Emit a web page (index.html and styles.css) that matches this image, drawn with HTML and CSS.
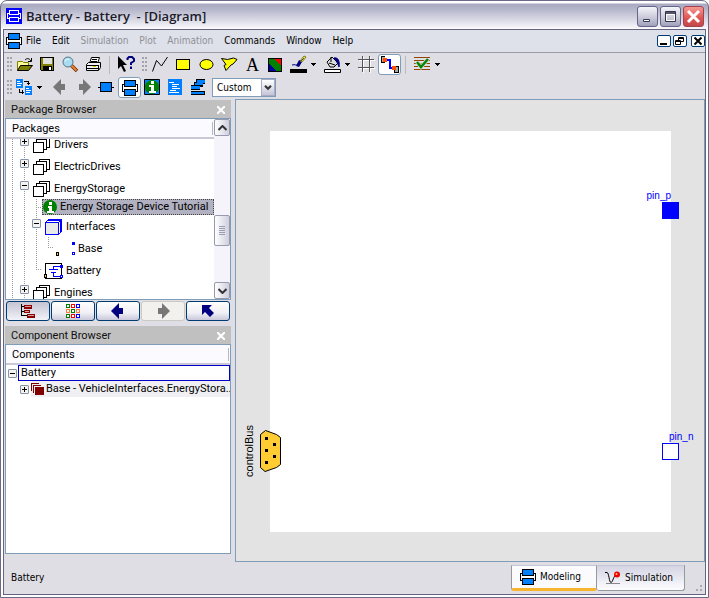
FILE: index.html
```html
<!DOCTYPE html>
<html lang="en">
<head>
<meta charset="utf-8">
<title>Battery - Battery - [Diagram]</title>
<link rel="stylesheet" href="styles.css">
</head>
<body>
<svg class="defs" aria-hidden="true">
  <symbol id="diagram" viewBox="0 0 16 16">
    <path d="M0 4h16v8H0z"/>
    <path d="M1 5h14v6H1z" fill="#fff"/>
    <path d="M2 0h12v7H2zM2 9h12v7H2z"/>
    <path d="M3 1h10v5H3zM3 10h10v5H3z" fill="#0080ff"/>
  </symbol>
  <symbol id="stack" viewBox="0 0 17 16">
    <path d="M6.500.500h10v10h-10z" fill="#fff" stroke="#000"/>
    <path d="M3.500 2.500h10v10h-10z" fill="#fff" stroke="#000"/>
    <path d="M.500 5.500h10v10h-10z" fill="#fff" stroke="#000"/>
  </symbol>
  <symbol id="caret" viewBox="0 0 5 3"><path d="M0 0h5v1H0zM1 1h3v1H1zM2 2h1v1H2z"/></symbol>
  <symbol id="arrow" viewBox="0 0 14 16"><path d="M0 8L8 0v5h4v6H8v5z" fill="currentColor"/></symbol>
  <symbol id="close" viewBox="0 0 8 8"><path d="M0 0l8 8M8 0L0 8" stroke="currentColor" stroke-width="2" fill="none"/></symbol>
</svg>
<div class="window">
  <header class="titlebar">
    <svg class="app-icon crisp" viewBox="0 0 16 16"><path d="M0 0h16v16H0z" fill="#00f"/><path d="M3.500 2.500h9v4h-9zM3.500 9.500h9v4h-9zM3 5.500H1.500v5H3M13 5.500h1.500v5H13" fill="none" stroke="#fff"/></svg>
    <h1>Battery - Battery&nbsp; - [Diagram]</h1>
    <button class="frame-btn" aria-label="Minimize"><svg width="15" height="15"><path d="M3.500 10.500h6v2h-6z" fill="#fff" stroke="#333b5c"/></svg></button>
    <button class="frame-btn" aria-label="Maximize"><svg width="15" height="15"><path d="M2.500 2.500h10v10h-10z" fill="none" stroke="#333348"/><path d="M3 3h9v2H3z" fill="#55556d"/><path d="M3.500 5.500h8v6h-8z" fill="none" stroke="#fff"/></svg></button>
    <button class="frame-btn frame-close" aria-label="Close"><svg width="15" height="15"><path d="M2 2l11 11M13 2L2 13" stroke="#fff" stroke-width="3"/></svg></button>
  </header>
  <div class="client">
    <nav class="menubar">
      <svg class="icon-16 crisp"><use href="#diagram"/></svg>
      <button>File</button><button>Edit</button><button disabled>Simulation</button><button disabled>Plot</button><button disabled>Animation</button><button>Commands</button><button>Window</button><button>Help</button>
      <span class="mdi">
        <button aria-label="Minimize diagram"><svg width="12" height="10"><path d="M2 7h7v2H2z"/></svg></button>
        <button aria-label="Restore diagram"><svg width="12" height="10"><path d="M4.500 1.500h5v4h-5zM4 2.500h6M1.500 4.500h5v4h-5zM1 5.500h6" fill="none" stroke="#000"/><path d="M2 6h4v2H2z" fill="#fff"/></svg></button>
        <button aria-label="Close diagram"><svg width="12" height="10"><path d="M2.500 1.500l7 7M9.500 1.500l-7 7" stroke="#000" stroke-width="2"/></svg></button>
      </span>
    </nav>
    <div class="toolbars">
      <div class="toolbar">
        <span class="grip"></span>
        <button aria-label="Open"><svg><path d="M1.500 14.500v-9h5l1 1h5v3" fill="#ff9" stroke="#808000"/><path d="M1.500 14.500l3-5h12l-4 5z" fill="#808000" stroke="#000"/><path d="M9 4c2-2 4-2 6 1M15.500 2v3.500H12" fill="none" stroke="#000"/></svg></button>
        <button aria-label="Save"><svg class="crisp" viewBox="-1 0 17 17"><path d="M.500 1.500h13v13h-12l-1-1z" fill="#808000" stroke="#000"/><path d="M3 2h9v6H3z" fill="#e0e0e0"/><path d="M3 10h9v5H3z" fill="#000"/><path d="M9 11h2v3H9z" fill="#fff"/></svg></button>
        <button aria-label="Find"><svg><path d="M9 9l6 6" stroke="#713000" stroke-width="3.500"/><path d="M9 9l5.500 5.500" stroke="#ed8230" stroke-width="2"/><circle cx="6" cy="6" r="5" fill="#a9dcf0" stroke="#53758b"/><path d="M3 5.500c1-2 2-3 4-2" stroke="#fff" fill="none"/></svg></button>
        <button aria-label="Print"><svg><path d="M4.500 7.500l2-6h8l-2 6z" fill="#fff" stroke="#000"/><path d="M7 3.500h5M6 5.500h6" stroke="#000"/><path d="M1.500 8.500l2-2h12v5l-2 3h-12z" fill="#eee" stroke="#000"/><path d="M1 9.500h12M1 12.500h12M13.500 9v5" stroke="#000" fill="none"/><path d="M8 10.500h3" stroke="#d8cc00"/></svg></button>
        <span class="sep"></span>
        <button aria-label="What's this"><svg><path d="M0 0v13l3-3 3 6 2-1-3-6h4z" fill="#000"/><path d="M9.500 4V2.500l1.500-1.500h3l2 2v2l-3 2v2M13 10.500v2.500" fill="none" stroke="#00007f" stroke-width="2"/></svg></button>
        <span class="grip inner"></span>
        <button aria-label="Line"><svg><path d="M.500 15.500l4-11 5 5.500 6-9" fill="none" stroke="#000"/></svg></button>
        <button aria-label="Rectangle"><svg class="crisp" viewBox="-1 -3 17 17"><path d="M.500.500h13v10H.500z" fill="#ff0" stroke="#000"/></svg></button>
        <button aria-label="Ellipse"><svg viewBox="-1 -3 17 17"><ellipse cx="7.500" cy="5.500" rx="6.500" ry="5" fill="#ff0" stroke="#000"/></svg></button>
        <button aria-label="Polygon"><svg><path d="M.500 2.500l6 1 6-1.500 3.500 1.500-4 4.500-2 1-5 5.500-2-5 2-1z" fill="#ff0" stroke="#000"/></svg></button>
        <button class="letter" aria-label="Text">A</button>
        <button aria-label="Bitmap"><svg class="crisp" viewBox="-1 -2 17 17"><path d="M0 0h14v14H0z" fill="#008000"/><path d="M5 0h9v8z" fill="red"/><path d="M0 5l9 9H0z" fill="#0000a0"/><path d="M.500.500h13v13H.500z" fill="none" stroke="#000"/></svg></button>
        <button class="drop" aria-label="Line color"><svg><path d="M2 9c3-1 4 1 6-1" stroke="#00007f" fill="none"/><path d="M6 10l3-6 3 2-3 5z" fill="#00007f"/><path d="M10 5l4-5 2 1-4 5z" fill="#ff0" stroke="#000" stroke-width=".5"/><path d="M10 6l4-4" stroke="#555"/><path d="M0 13h17v4H0z"/></svg><svg class="caret"><use href="#caret"/></svg></button>
        <button class="drop" aria-label="Fill color"><svg><path d="M3 6l5-5 6 6-4 4H6z" fill="#ddd" stroke="#000"/><path d="M5 7l6 2M7 1v5" stroke="#000"/><path d="M10 2c4-1 6 3 5 9-1-3-2-5-5-9" fill="#00007f" stroke="#00007f"/><path d="M.500 13.500h16v3H.500z" fill="#fff" stroke="#000"/></svg><svg class="caret"><use href="#caret"/></svg></button>
        <button aria-label="Grid"><svg class="crisp"><path d="M4.500 0v16M11.500 0v16M0 3.500h16M0 11.500h16" stroke="#fff" transform="translate(1 1)"/><path d="M4.500 0v16M11.500 0v16M0 3.500h16M0 11.500h16" stroke="#555"/></svg></button>
        <button class="checked" aria-label="Connect"><svg class="crisp"><path d="M0 0h4v7H0zM13 10h5v7h-5z" fill="#000"/><path d="M1 1h3v5H1zM14 11h3v5h-3z" fill="#aaa"/><path d="M5 4h4v8h4" stroke="#00f" stroke-width="2" fill="none"/><path d="M2 2h4v4H2zM11 10h4v4h-4z" fill="#ff5000"/></svg></button>
        <span class="sep"></span>
        <button class="drop" aria-label="Check"><svg><path d="M0 1.500h16M0 4.500h16M0 7.500h16M0 10.500h16M0 13.500h16" stroke="#904600"/><path d="M3 6l4 5 7-8" fill="none" stroke="#dfdfe5" stroke-width="4"/><path d="M3 6l4 5 7-8" fill="none" stroke="#080" stroke-width="2.500"/></svg><svg class="caret"><use href="#caret"/></svg></button>
      </div>
      <div class="toolbar">
        <span class="grip"></span>
        <button class="drop wide" aria-label="Switch view"><svg class="crisp"><path d="M0 0h7v9H0zM9 7h7v9H9z" fill="#0080ff"/><path d="M1 2.500h3M1 4.500h5M1 6.500h4M10 9.500h3M10 11.500h5M10 13.500h4" stroke="#fff"/><path d="M8 2.500h4.500V6M11 4.500h3M3.500 10v3H8M6.500 11v4" fill="none" stroke="#000"/></svg><svg class="caret"><use href="#caret"/></svg></button>
        <button class="grey" aria-label="Back"><svg><use href="#arrow" x="1" width="14" height="16"/></svg></button>
        <button class="grey" aria-label="Forward"><svg class="flip"><use href="#arrow" x="1" width="14" height="16"/></svg></button>
        <button aria-label="Icon view"><svg class="crisp" viewBox="0 -3 17 17"><path d="M0 5.500h16" stroke="#000"/><path d="M2.500.500h11v9h-11z" fill="#0080ff" stroke="#000"/></svg></button>
        <button class="checked" aria-label="Diagram view"><svg class="crisp"><use href="#diagram" x="1" y="1" width="16" height="16"/></svg></button>
        <button aria-label="Documentation"><svg><path d="M.500.500h15v15H.500z" fill="#0080ff" stroke="#000"/><circle cx="8" cy="8" r="7" fill="#008000"/><path d="M7 2h3v3H7zM5 6h5v6h2v2H5v-2h2V8H5z" fill="#fff"/></svg></button>
        <button aria-label="Text view"><svg class="crisp" viewBox="-1 0 17 17"><path d="M0 0h14v16H0z" fill="#0080ff"/><path d="M1 3.500h5M4 5.500h7M4 7.500h5M4 9.500h8M2 11.500h6M1 13.500h10" stroke="#fff"/></svg></button>
        <button aria-label="Used classes"><svg class="crisp"><path d="M6 0h9v5H6zM4 3h9v5H4zM1 6h9v5H1zM1 12h14v4H1z"/><path d="M7 1h8v3H7zM5 4h8v2H5zM1 7h9v3H1zM1 13h13v2H1z" fill="#0080ff"/></svg></button>
        <span class="combo"><select aria-label="Zoom"><option>Custom</option></select><svg width="14" height="17" viewBox="0 0 14 17"><path d="M3.500 6.500l3.500 3.500 3.500-3.500" stroke="#333" stroke-width="2.500" fill="none"/></svg></span>
      </div>
    </div>
    <div class="workspace">
      <aside class="sidebar">
        <section class="panel packages">
          <h2>Package Browser<button aria-label="Close Package Browser"><svg width="8" height="8"><use href="#close"/></svg></button></h2>
          <div class="box">
            <div class="pane">
              <h3>Packages</h3>
              <ul class="tree">
                <li><i class="g"></i><i class="g"><button class="tog plus" aria-label="Expand Drivers"></button></i><svg class="stack crisp"><use href="#stack"/></svg>Drivers</li>
                <li><i class="g"></i><i class="g"><button class="tog plus" aria-label="Expand ElectricDrives"></button></i><svg class="stack crisp"><use href="#stack"/></svg>ElectricDrives</li>
                <li><i class="g"></i><i class="g"><button class="tog" aria-label="Collapse EnergyStorage"></button></i><svg class="stack crisp"><use href="#stack"/></svg>EnergyStorage</li>
                <li class="short"><i class="g"></i><i class="g"></i><i class="g tee"></i><span class="selected"><svg width="14" height="14"><circle cx="7" cy="7" r="7" fill="#008000"/><path d="M6 2h3v3H6zM5 6h4v5h2v2H4v-2h2V8H5z" fill="#fff"/></svg>Energy Storage Device Tutorial</span></li>
                <li><i class="g"></i><i class="g"></i><i class="g"><button class="tog" aria-label="Collapse Interfaces"></button></i><svg class="stack crisp" viewBox="0 0 17 16"><path d="M.500 3.500h13v12H.500z" fill="#e8e8e8" stroke="#00f"/><path d="M.500 3.500l3-3h13v12l-3 3M13.500 3.500l3-3M15.500 2v12M2 1.500h13" fill="none" stroke="#00f"/></svg>Interfaces</li>
                <li><i class="g"></i><i class="g"></i><i class="g"></i><i class="g end"></i><svg class="stack crisp" viewBox="0 0 17 16"><path d="M15 1h3v3h-3z" fill="#00f"/><path d="M15.500 11.500h2v2h-2z" fill="#fff" stroke="#00f"/><path d="M-.500 11.500h2v3h-2z" fill="#ffc829" stroke="#000"/></svg>Base</li>
                <li><i class="g"></i><i class="g"></i><i class="g end"></i><svg class="stack crisp" viewBox="0 0 17 16"><path d="M.500.500h16v15H.500z" fill="#fff" stroke="#000"/><path d="M16 3.500H8.500V6M4 6.500h9M6 9.500h5M8.500 10v3.500H16" fill="none" stroke="#00f"/><path d="M15 2h3v3h-3z" fill="#00f"/><path d="M15.500 12.500h2v2h-2z" fill="#fff" stroke="#00f"/><path d="M-1 11h3v4h-3z"/><path d="M0 12h1v2H0z" fill="#fc3"/></svg>Battery</li>
                <li><i class="g"></i><i class="g"><button class="tog plus" aria-label="Expand Engines"></button></i><svg class="stack crisp"><use href="#stack"/></svg>Engines</li>
              </ul>
            </div>
            <div class="scroll">
              <button aria-label="Scroll up"><svg width="9" height="6"><path d="M.500 5l4-4 4 4" fill="none" stroke="#333" stroke-width="2"/></svg></button>
              <span class="space-top"></span><span class="thumb"></span><span class="space-bottom"></span>
              <button aria-label="Scroll down"><svg width="9" height="6"><path d="M.500 1l4 4 4-4" fill="none" stroke="#333" stroke-width="2"/></svg></button>
            </div>
          </div>
          <div class="tree-tools">
            <button class="pressed" aria-label="Tree view"><svg class="crisp" width="16" height="14"><path d="M1.500 0v11.500H7M1 2.500h4M5 7.500H1" fill="none" stroke="#000"/><path d="M4 1h8v4H4zM4 6h6v3H4zM7 10h8v4H7z" fill="#8b0000"/><path d="M5 2h6v1H5zM5 7h4v1H5zM8 11h6v1H8z" fill="#d9a0a0"/></svg></button>
            <button aria-label="Icon grid"><svg class="crisp" width="14" height="14" fill="#fff"><path d="M.500.500h3v3h-3zM5.500 5.500h3v3h-3z" stroke="green"/><path d="M5.500.500h3v3h-3z" stroke="red"/><path d="M10.500.500h3v3h-3z" stroke="#00f"/><path d="M.500 5.500h3v3h-3zM10.500 5.500h3v3h-3z" stroke="#ff7c40"/><path d="M.500 10.500h3v3h-3z" stroke="green"/><path d="M5.500 10.500h3v3h-3z" stroke="red"/><path d="M10.500 10.500h3v3h-3z" stroke="#00f"/></svg></button>
            <button aria-label="Previous"><svg width="14" height="16"><use href="#arrow"/></svg></button>
            <button class="off" disabled aria-label="Next"><svg class="flip" width="14" height="16"><use href="#arrow"/></svg></button>
            <button aria-label="Up"><svg width="12" height="12"><path d="M0 0h10L7 3l5 5-4 4-5-5-3 3z" fill="currentColor"/></svg></button>
          </div>
        </section>
        <section class="panel components">
          <h2>Component Browser<button aria-label="Close Component Browser"><svg width="8" height="8"><use href="#close"/></svg></button></h2>
          <div class="box">
            <div class="pane">
              <h3>Components</h3>
              <ul class="parts">
                <li><button class="tog" aria-label="Collapse Battery"></button><span class="focus">Battery</span></li>
                <li class="child"><button class="tog plus" aria-label="Expand Base"></button><span class="base"><svg class="crisp" width="13" height="12"><path d="M0 0h8v8H0zM2 2h8v8H2z" fill="#800000"/><path d="M1.500 8V1.500H8M3.500 10V3.500H10" fill="none" stroke="#eee"/><path d="M2 2h6v1H3v5H2z" fill="#800000"/><path d="M4 4h9v8H4z" fill="#800000"/></svg>Base - VehicleInterfaces.EnergyStora..</span></li>
              </ul>
            </div>
          </div>
        </section>
      </aside>
      <main class="canvas">
        <div class="sheet">
          <div class="bus"><span>controlBus</span><svg width="22" height="42"><path d="M5.500.500L16.500 4.500l4 3v27l-4 3L5 41.500l-4.500-4V4.500z" fill="#fc3" stroke="#000"/><path d="M5 7h3v3H5zM5 19h3v3H5zM5 31h3v3H5zM13 13h3v3h-3zM13 25h3v3h-3z"/></svg></div>
          <div class="pin pin-p"><span>pin_p</span><i></i></div>
          <div class="pin pin-n"><span>pin_n</span><i></i></div>
        </div>
      </main>
    </div>
    <footer class="status">
      <span class="message">Battery</span>
      <button class="tab active"><svg class="icon-16 crisp"><use href="#diagram"/></svg>Modeling</button>
      <button class="tab"><svg width="16" height="14"><path d="M0 1.500h2c2 0 2 10 4 10s2-7 6-8" fill="none" stroke="#000"/><path d="M1 12.500h14" stroke="#888"/><circle cx="12" cy="3.500" r="3" fill="#e00"/><circle cx="11.500" cy="3" r="1" fill="#fc6"/></svg>Simulation</button>
      <span class="size-grip"></span>
    </footer>
  </div>
</div>
</body>
</html>
```
FILE: styles.css
```css
* { box-sizing: border-box; }
html { background: #fff; }
body { margin: 0; font: 11px/14px "Noto Sans", sans-serif; color: #000; }
button { margin: 0; padding: 0; border: 0; background: none; font: inherit; color: inherit; }
h1, h2, h3, ul { margin: 0; padding: 0; font-weight: normal; font-size: inherit; list-style: none; }
svg { flex: none; display: block; }
.defs { position: absolute; width: 0; height: 0; }
.crisp { shape-rendering: crispEdges; }
.icon-16 { width: 16px; height: 16px; }
.flip { transform: scaleX(-1); }

.window {
  display: flex; flex-direction: column; height: 100vh;
  border: 1px solid #6b6985; border-radius: 7px 7px 0 0;
  background: linear-gradient(#fff 0, #fff 2px, #a9a9c2 3px, #b4b4ca 8px, #f6f6fa 27px, #fff 28px);
  padding: 0 2px 2px;
}
.titlebar { display: flex; align-items: center; gap: 2px; height: 28px; padding: 3px 2px 0 3px; }
.titlebar h1 { flex: 1; margin-left: 2px; font: 600 13px/21px "Open Sans", sans-serif; color: #1c1c2b; white-space: nowrap; }
.app-icon { width: 16px; height: 16px; margin-bottom: 1px; }
.frame-btn {
  width: 21px; height: 21px; display: flex; align-items: center; justify-content: center;
  border: 1px solid #65658a; border-radius: 3px;
  background: linear-gradient(#f4f4fa, #c6c6d6 60%, #a0a0bb);
}
.frame-close { border-color: #a5404f; background: linear-gradient(#f49994, #dd5552 60%, #c2484b); }

.client {
  flex: 1; min-height: 0; display: flex; flex-direction: column;
  border: 1px solid #65637f; background: #dfdee4;
}
.menubar {
  display: flex; align-items: center; gap: 11px; height: 23px; padding: 0 0 0 2px;
  background: #dee1ea; border-bottom: 1px solid #9c9ba6;
  font: 10px/14px "DejaVu Sans Condensed", sans-serif;
}
.menubar > svg { margin-right: -7px; }
.menubar button:disabled { color: #8f8f96; }
.mdi { display: flex; gap: 2px; margin-left: auto; }
.mdi button { display: flex; width: 14px; height: 12px; border: 1px solid #003c74; border-radius: 2px; background: #fff; }
.mdi button:last-child { margin-left: 2px; }

.toolbars { padding: 0 3px; }
.toolbar { display: flex; align-items: center; height: 23px; }
.toolbar button { width: 23px; height: 21px; display: flex; align-items: center; justify-content: center; }
.toolbar button svg { width: 17px; height: 17px; overflow: visible; }
.toolbar .drop { width: 34px; gap: 4px; padding-left: 3px; justify-content: flex-start; }
.toolbar .wide { width: 36px; }
.toolbar button .caret { width: 5px; height: 3px; }
.toolbar .checked { border: 1px solid #7f9db9; border-radius: 3px; background: #fff; }
.toolbar .letter { font: 18px/20px "Liberation Serif", serif; }
.grey { color: #777; }
.grip { width: 5px; height: 15px; margin: 0 1px 0 0; background: radial-gradient(circle at 1px 1px, #a4a3ac 1px, transparent 1px) 0 0 / 3px 4px; }
.grip.inner { margin: 0 2px 0 4px; }
.sep { width: 1px; height: 18px; margin: 0 5px 0 4px; background: #bbb; }
.combo { display: flex; position: relative; width: 64px; height: 19px; margin-left: 2px; border: 1px solid #7f9db9; background: #fff; }
.combo select { flex: 1; width: 100%; appearance: none; border: 0; padding: 0 0 0 4px; background: none; color: #000; font: 10px/14px "DejaVu Sans Condensed", sans-serif; }
.combo svg { position: absolute; right: 0; top: 0; pointer-events: none; border: 1px solid #aaabc4; background: linear-gradient(#fff, #c5c5d8); }

.workspace { flex: 1; min-height: 0; display: grid; grid-template-columns: 226px minmax(0, 1fr); gap: 4px; padding-left: 1px; }
.sidebar { display: flex; flex-direction: column; gap: 5px; padding: 1px 0 8px; font: 11px/14px Roboto, sans-serif; min-height: 0; }
.panel { display: flex; flex-direction: column; }
.components { flex: 1; }
.panel h2 { display: flex; justify-content: space-between; align-items: center; height: 18px; padding: 1px 6px 0; background: #c0c0c0; color: #111; }
.panel h2 button { color: #fff; }
.box { display: flex; border: 1px solid #7f9db9; background: #fff; }
.components .box { flex: 1; }
.pane { flex: 1; min-width: 0; }
.pane h3 { height: 20px; padding: 0 6px; line-height: 20px; background: linear-gradient(90deg, transparent calc(100% - 2px), #b8b8c4 0 calc(100% - 1px), transparent 0) 0 3px / 100% 13px no-repeat, #fafaff; border-bottom: 2px solid #c9c9d6; }
.packages .box { height: 182px; }
.tree { height: 160px; overflow: hidden; }
.tree li { display: flex; align-items: center; height: 22px; padding-top: 2px; white-space: nowrap; }
.tree li:first-child { margin-top: -6px; }
.tree .short { height: 16px; padding-top: 0; }
.stack { width: 17px; height: 16px; margin: 0 4px 0 3px; overflow: visible; }
.g { width: 12px; align-self: stretch; margin-top: -2px; display: flex; justify-content: center; padding-top: 4px; background: repeating-linear-gradient(#999 0 1px, #fff 1px 2px) 6px 0 / 1px 100% no-repeat; }
.short .g { margin-top: 0; }
.g.end { background: repeating-linear-gradient(#999 0 1px, #fff 1px 2px) 6px 0 / 1px 10px no-repeat, repeating-linear-gradient(90deg, #999 0 1px, #fff 1px 2px) 6px 10px / 5px 1px no-repeat; }
.g.tee { background: repeating-linear-gradient(#999 0 1px, #fff 1px 2px) 6px 0 / 1px 100% no-repeat, repeating-linear-gradient(90deg, #999 0 1px, #fff 1px 2px) 6px 8px / 6px 1px no-repeat; }
.tog {
  flex: none; width: 9px; height: 9px; border: 1px solid #8593a8; border-radius: 1px;
  background: linear-gradient(#000, #000) center / 5px 1px no-repeat, #f4f3f0;
}
.g .tog { margin-left: 1px; }
.tog.plus { background: linear-gradient(#000, #000) center / 5px 1px no-repeat, linear-gradient(#000, #000) center / 1px 5px no-repeat, #f4f3f0; }
.selected { flex: 1; display: flex; align-items: center; gap: 3px; height: 16px; line-height: 16px; background: #b1b1c1; border: 1px dotted #444; }
.scroll { display: flex; flex-direction: column; width: 16px; background: #f5f4fa; }
.scroll button, .thumb { display: flex; align-items: center; justify-content: center; height: 17px; border: 1px solid #9899ae; border-radius: 2px; background: linear-gradient(90deg, #fff, #cfcfde); }
.space-top { flex: 79; }
.space-bottom { flex: 36; }
.scroll .thumb { height: 31px; background: repeating-linear-gradient(#9c9cb2 0 1px, transparent 1px 2px) center / 6px 9px no-repeat, linear-gradient(90deg, #fff, #cfcfde); }
.tree-tools { display: flex; gap: 1px; padding: 1px 1px 0; color: #000080; }
.tree-tools button { flex: 1; height: 20px; display: flex; align-items: center; justify-content: center; border: 1px solid #003c74; border-radius: 3px; background: linear-gradient(#fff, #f0f0f6 60%, #c8c8da); }
.tree-tools .pressed { background: linear-gradient(#c4c4d4, #f2f2f8); }
.tree-tools .off { border-color: #cac9c5; background: #f2f1ed; color: #777; }
.parts li { display: flex; align-items: center; height: 16px; gap: 1px; padding-left: 2px; }
.parts .child { padding-left: 14px; gap: 2px; }
.focus { flex: 1; height: 16px; padding-left: 2px; border: 1px solid #00c; }
.base { flex: 1; display: flex; align-items: center; gap: 2px; height: 16px; background: #f0f0f4; white-space: nowrap; overflow: hidden; }

.canvas { border: 1px solid #7f9db9; background: #e3e3e3; padding: 31px 33px 29px 34px; }
.sheet { position: relative; height: 100%; background: #fff; font: 10px/12px "Liberation Sans", sans-serif; }
.bus { position: absolute; left: -27px; top: 75%; margin-top: -7px; display: flex; align-items: center; gap: 5px; }
.bus span { writing-mode: vertical-rl; transform: rotate(180deg); font-size: 11px; }
.pin { position: absolute; right: -8px; margin-top: -1px; color: #00f; }
.pin i { display: block; width: 17px; height: 17px; margin-left: auto; border: 1px solid #00f; background: #fff; }
.pin-p { top: 15%; }
.pin-n { top: 75%; right: -24px; }
.pin-p span { margin-right: 8px; }
.pin-p i { background: #00f; }
.pin-n span { margin-left: 7px; }
.pin-n i { margin-right: 16px; }

.status { display: flex; align-items: center; height: 32px; padding-left: 7px; font: 10px/14px "DejaVu Sans Condensed", sans-serif; }
.message { flex: 1; }
.tab { display: flex; align-items: center; gap: 4px; width: 86px; height: 26px; padding-left: 8px; border: 1px solid #919b9c; border-top-color: #c5c5d5; border-radius: 0 0 3px 3px; background: linear-gradient(#d4d4e4, #fdfdff); }
.tab + .tab { border-left: 0; width: 88px; }
.tab.active { border-bottom: 3px solid #f9b42d; background: #fbfbfe; }
.size-grip { align-self: flex-end; width: 12px; height: 12px; margin: 0 1px 1px 7px; background: radial-gradient(circle at 1px 1px, #aaa 1px, transparent 1px) 0 0 / 4px 4px; clip-path: polygon(100% 0, 100% 100%, 0 100%); }
```
